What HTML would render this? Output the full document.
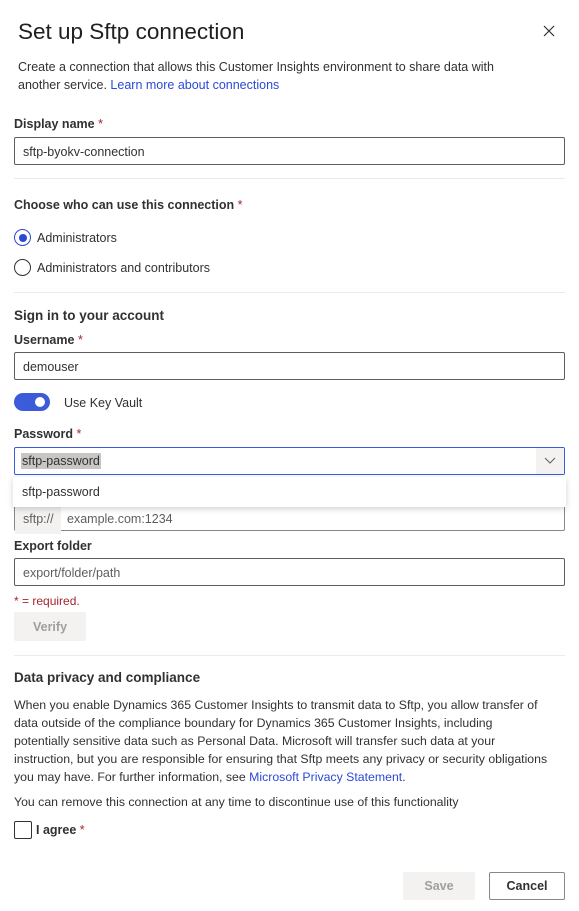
<!DOCTYPE html>
<html><head><style>
*{margin:0;padding:0;box-sizing:border-box}
body{width:579px;height:911px;background:#fff;font-family:"Liberation Sans",sans-serif;color:#323130;position:relative;overflow:hidden;font-size:12.5px}
.a{position:absolute;white-space:nowrap}
.lbl{font-weight:bold;font-size:12.5px;color:#323130}
.req{color:#a4262c;font-weight:normal}
.inp{position:absolute;left:14px;width:551px;height:28px;border:1px solid #605e5c;border-radius:2px;padding-left:8px;line-height:28px;font-size:12.5px}
.hr{position:absolute;left:14px;width:551px;height:1px;background:#edebe9}
.ph{color:#605e5c}
a{color:#2b49d6;text-decoration:none}
</style></head><body>
<div class="a" style="left:18px;top:19px;font-size:22.5px;color:#201f1e">Set up Sftp connection</div>
<svg class="a" style="left:543px;top:25px" width="12" height="12" viewBox="0 0 12 12"><path d="M1 1L11 11M11 1L1 11" stroke="#323130" stroke-width="1.2"/></svg>
<div class="a" style="left:18px;top:58px;line-height:18px;font-size:12.5px">Create a connection that allows this Customer Insights environment to share data with<br>another service. <a>Learn more about connections</a></div>

<div class="a lbl" style="left:14px;top:117px">Display name <span class="req">*</span></div>
<div class="inp" style="top:137px">sftp-byokv-connection</div>
<div class="hr" style="top:178px"></div>

<div class="a lbl" style="left:14px;top:198px">Choose who can use this connection <span class="req">*</span></div>
<div class="a" style="left:14px;top:229px;width:17px;height:17px;border:1px solid #2b49d6;border-radius:50%"><div style="margin:3.5px;width:8px;height:8px;border-radius:50%;background:#2b49d6"></div></div>
<div class="a" style="left:37px;top:231px">Administrators</div>
<div class="a" style="left:14px;top:259px;width:17px;height:17px;border:1px solid #323130;border-radius:50%"></div>
<div class="a" style="left:37px;top:261px">Administrators and contributors</div>
<div class="hr" style="top:292px"></div>

<div class="a" style="left:14px;top:308px;font-weight:bold;font-size:13.5px">Sign in to your account</div>
<div class="a lbl" style="left:14px;top:333px">Username <span class="req">*</span></div>
<div class="inp" style="top:352px">demouser</div>
<div class="a" style="left:14px;top:393px;width:36px;height:18px;border-radius:9px;background:#3b5bdb"><div style="position:absolute;right:5px;top:4px;width:10px;height:10px;border-radius:50%;background:#fff"></div></div>
<div class="a" style="left:64px;top:396px;font-size:12.5px">Use Key Vault</div>
<div class="a lbl" style="left:14px;top:427px">Password <span class="req">*</span></div>
<div class="inp" style="top:447px;border-color:#3b5bdb;padding-left:6px;line-height:27px"><span style="background:#c8c6c4;padding:1px 1px">sftp-password</span>
<div style="position:absolute;right:0;top:0;width:28px;height:26px;background:#f3f2f1"><svg style="position:absolute;left:8px;top:9px" width="12" height="8" viewBox="0 0 12 8"><path d="M1 1L6 6L11 1" stroke="#605e5c" fill="none"/></svg></div></div>

<div class="inp" style="top:503px;height:28px;padding-left:0;border-color:#8a8886;line-height:30px"><span style="display:inline-block;background:#f3f2f1;width:46px;padding-left:8px;color:#605e5c">sftp://</span><span class="ph" style="padding-left:6px">example.com:1234</span></div>
<div class="a" style="left:13px;top:477px;width:553px;height:30px;background:#fff;box-shadow:0 2px 6px rgba(0,0,0,.18);padding-left:9px;line-height:31px">sftp-password</div>

<div class="a lbl" style="left:14px;top:539px">Export folder</div>
<div class="inp ph" style="top:558px">export/folder/path</div>
<div class="a" style="left:14px;top:594px;color:#a4262c;font-size:12px">* = required.</div>
<div class="a" style="left:14px;top:612px;width:72px;height:29px;background:#f3f2f1;color:#a19f9d;text-align:center;line-height:31px;font-weight:bold;border-radius:2px">Verify</div>
<div class="hr" style="top:655px"></div>

<div class="a" style="left:14px;top:670px;font-weight:bold;font-size:13.5px">Data privacy and compliance</div>
<div class="a" style="left:14px;top:696px;line-height:18px;font-size:12.3px">When you enable Dynamics 365 Customer Insights to transmit data to Sftp, you allow transfer of<br>data outside of the compliance boundary for Dynamics 365 Customer Insights, including<br>potentially sensitive data such as Personal Data. Microsoft will transfer such data at your<br>instruction, but you are responsible for ensuring that Sftp meets any privacy or security obligations<br>you may have. For further information, see <a>Microsoft Privacy Statement</a>.</div>
<div class="a" style="left:14px;top:795px;font-size:12.3px">You can remove this connection at any time to discontinue use of this functionality</div>
<div class="a" style="left:14px;top:821px;width:18px;height:18px;border:1px solid #323130;border-radius:2px"></div>
<div class="a" style="left:36px;top:823px;font-weight:bold">I agree <span class="req">*</span></div>

<div class="a" style="left:403px;top:872px;width:72px;height:28px;background:#f3f2f1;color:#a19f9d;text-align:center;line-height:29px;font-weight:bold;border-radius:2px">Save</div>
<div class="a" style="left:489px;top:872px;width:76px;height:28px;border:1px solid #8a8886;text-align:center;line-height:27px;font-weight:bold;border-radius:2px">Cancel</div>
</body></html>
